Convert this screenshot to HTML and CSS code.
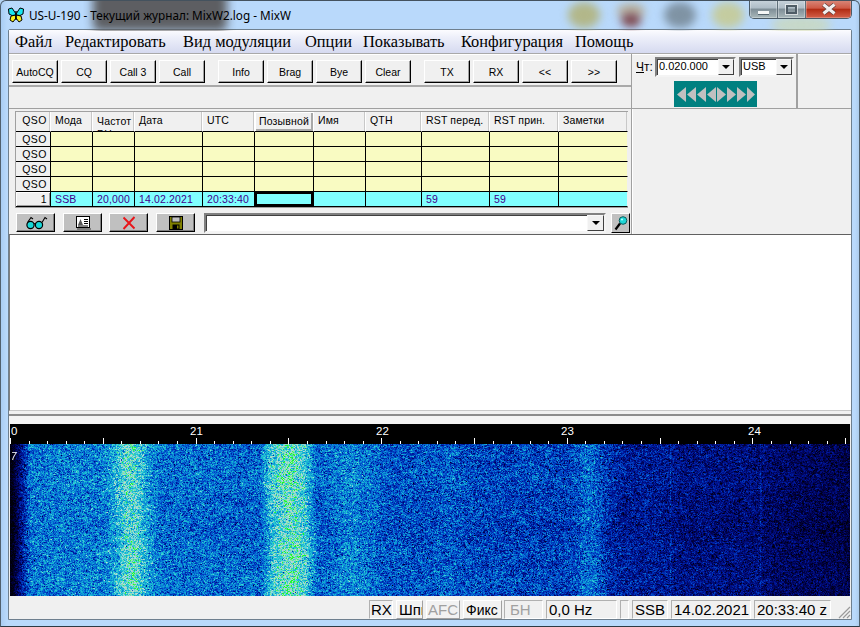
FILE: index.html
```html
<!DOCTYPE html>
<html lang="ru">
<head>
<meta charset="utf-8">
<title>MixW</title>
<link rel="stylesheet" href="styles.css">
</head>
<body>
<div class="window">
  <div class="glass">
    <div class="blob shade"></div>
    <div class="blob b1"></div><div class="blob b2"></div><div class="blob b2b"></div><div class="blob b3"></div><div class="blob b4"></div><div class="blob b5"></div>
  </div>
  <header class="titlebar">
    <svg class="appicon" viewBox="0 0 16 16" width="16" height="16">
      <path d="M8 7 L4 1 L0.5 2 L1 7 L4 8.5 L8 8Z" fill="#19e6f0" stroke="#000" stroke-width="1"/>
      <path d="M8 7 L12 1 L15.5 2 L15 7 L12 8.5 L8 8Z" fill="#19e6f0" stroke="#000" stroke-width="1"/>
      <path d="M8 8 L3 9 L2 13 L5 15 L8 11Z" fill="#f6ee1a" stroke="#000" stroke-width="1"/>
      <path d="M8 8 L13 9 L14 13 L11 15 L8 11Z" fill="#f6ee1a" stroke="#000" stroke-width="1"/>
      <path d="M8 4V13" stroke="#000" stroke-width="1.4"/>
    </svg>
    <span class="apptitle">US-U-190 - Текущий журнал: MixW2.log - MixW</span>
    <div class="winbtns">
      <div class="wb wb-min"><i class="dash"></i></div>
      <div class="wb wb-max"><i class="sq"></i></div>
      <div class="wb wb-close">
        <svg viewBox="0 0 16 12" width="16" height="12"><path d="M2.5 1.5 L13.5 10.5 M13.5 1.5 L2.5 10.5" stroke="#5b3a36" stroke-width="4.4"/><path d="M2.5 1.5 L13.5 10.5 M13.5 1.5 L2.5 10.5" stroke="#f2eeee" stroke-width="3"/></svg>
      </div>
    </div>
  </header>

  <main class="client">
    <nav class="menu">
      <span class="mi m1">Файл</span><span class="mi m2">Редактировать</span><span class="mi m3">Вид модуляции</span><span class="mi m4">Опции</span><span class="mi m5">Показывать</span><span class="mi m6">Конфигурация</span><span class="mi m7">Помощь</span>
    </nav>

    <section class="topband">
      <div class="macros">
        <div class="btnrow">
          <div class="group">
            <button class="mbtn">AutoCQ</button><button class="mbtn">CQ</button><button class="mbtn">Call 3</button><button class="mbtn">Call</button>
          </div>
          <div class="group">
            <button class="mbtn">Info</button><button class="mbtn">Brag</button><button class="mbtn">Bye</button><button class="mbtn">Clear</button>
          </div>
          <div class="group">
            <button class="mbtn">TX</button><button class="mbtn">RX</button><button class="mbtn">&lt;&lt;</button><button class="mbtn">&gt;&gt;</button>
          </div>
        </div>
      </div>
      <div class="tuner">
        <div class="tunerow">
          <label class="chlabel"><u>Ч</u>т:</label>
          <div class="combo c-freq"><span class="cval">0.020.000</span><span class="carrow"><i></i></span></div>
          <div class="combo c-mode"><span class="cval">USB</span><span class="carrow"><i></i></span></div>
        </div>
        <svg class="arrows" viewBox="0 0 83 26" width="83" height="26">
          <rect width="83" height="26" fill="#008080"/>
          <g fill="#c0c0c0">
            <path d="M3 13.5 L12 6 V21Z"/><path d="M13 13.5 L22 6 V21Z"/><path d="M23 13.5 L32 6 V21Z"/><path d="M33 13.5 L42 6 V21Z"/>
            <path d="M43 6 L52 13.5 L43 21Z"/><path d="M53 6 L62 13.5 L53 21Z"/><path d="M63 6 L72 13.5 L63 21Z"/><path d="M73 6 L81 13.5 L73 21Z"/>
          </g>
        </svg>
      </div>
    </section>

    <section class="logband">
      <div class="logleft">
        <table class="log">
          <colgroup>
            <col class="k35"><col class="k42"><col class="k42"><col class="k68"><col class="k52"><col class="k59"><col class="k52"><col class="k56"><col class="k68"><col class="k69"><col class="k69">
          </colgroup>
          <thead>
            <tr>
              <th class="rh">QSO</th><th>Мода</th><th class="clip"><div>Частот<br>РЦ</div></th><th>Дата</th><th>UTC</th><th class="sel">Позывной</th><th>Имя</th><th>QTH</th><th>RST перед.</th><th>RST прин.</th><th>Заметки</th>
            </tr>
          </thead>
          <tbody>
            <tr class="old"><td class="rh">QSO</td><td></td><td></td><td></td><td></td><td></td><td></td><td></td><td></td><td></td><td></td></tr>
            <tr class="old"><td class="rh">QSO</td><td></td><td></td><td></td><td></td><td></td><td></td><td></td><td></td><td></td><td></td></tr>
            <tr class="old"><td class="rh">QSO</td><td></td><td></td><td></td><td></td><td></td><td></td><td></td><td></td><td></td><td></td></tr>
            <tr class="old"><td class="rh">QSO</td><td></td><td></td><td></td><td></td><td></td><td></td><td></td><td></td><td></td><td></td></tr>
            <tr class="cur"><td class="rh rnum">1</td><td>SSB</td><td>20,000</td><td>14.02.2021</td><td>20:33:40</td><td class="focus"></td><td></td><td></td><td>59</td><td>59</td><td></td></tr>
          </tbody>
        </table>
        <div class="logtools">
          <button class="ibtn"><svg viewBox="0 0 24 14" width="24" height="14"><circle cx="6.5" cy="9" r="3.6" fill="#19d8d8" stroke="#000" stroke-width="1.2"/><circle cx="15" cy="9" r="3.6" fill="#19d8d8" stroke="#000" stroke-width="1.2"/><path d="M10 8 Q11 7 11.6 8 M3.5 6.5 L7 1.5 L9 3 M18 6.5 L21 1.5 L23 3" fill="none" stroke="#000" stroke-width="1.1"/></svg></button>
          <button class="ibtn"><svg viewBox="0 0 16 15" width="16" height="15"><rect x="1.5" y="1.5" width="13" height="11" fill="#fff" stroke="#000"/><path d="M3 10 L5.5 4 L8 10Z" fill="#555"/><path d="M9 4.5h4M9 6.5h4M9 8.5h4M3 11h10" stroke="#000"/><path d="M2 14h14" stroke="#666" stroke-width="1.4"/></svg></button>
          <button class="ibtn"><svg viewBox="0 0 14 14" width="14" height="14"><path d="M1.5 1.5 L12.5 12.5 M12.5 1 L1.5 13" stroke="#e8161a" stroke-width="1.9"/></svg></button>
          <button class="ibtn"><svg viewBox="0 0 14 14" width="14" height="14"><rect x="0.5" y="0.5" width="13" height="13" fill="#808000" stroke="#000"/><rect x="3" y="1" width="8" height="5" fill="#c0c0c0" stroke="#000" stroke-width=".8"/><rect x="3.5" y="8.5" width="7" height="5" fill="#000"/><rect x="8" y="9.5" width="1.5" height="3" fill="#808000"/></svg></button>
          <div class="combo c-search"><span class="cval"></span><span class="carrow"><i></i></span></div>
          <button class="findbtn"><svg viewBox="0 0 14 16" width="14" height="16"><path d="M1.5 14.5 L6 8.5" stroke="#000" stroke-width="2.2"/><circle cx="9" cy="5.5" r="3.8" fill="#1fd6d6" stroke="#0a5c5c" stroke-width="1"/><circle cx="8" cy="4.5" r="1" fill="#bff"/></svg></button>
        </div>
      </div>
      <div class="logright"></div>
    </section>

    <section class="rxtext"></section>
    <div class="splitter"></div>

    <section class="scope">
      <div class="ruler">
        <svg id="ruler" width="840" height="20" viewBox="0 0 840 20">
          <path id="ticks" stroke="#fff" stroke-width="1" fill="none"/>
          <g class="rlabels" fill="#fff">
            <text x="1" y="11">0</text>
            <text x="180" y="11">21</text>
            <text x="366" y="11">22</text>
            <text x="551" y="11">23</text>
            <text x="738" y="11">24</text>
          </g>
        </svg>
      </div>
      <div class="fallwrap">
        <canvas id="fall" width="840" height="152"></canvas>
        <span class="level">7</span>
      </div>
    </section>

    <footer class="status">
      <span class="sb plain w-rx">RX</span>
      <span class="sb up w-sh">Шпи</span>
      <span class="sb up dis w-afc">AFC</span>
      <span class="sb up w-fix">Фикс</span>
      <span class="sb plain dis w-bn">БН</span>
      <span class="sb plain w-hz">0,0 Hz</span>
      <span class="sb plain w-e"></span>
      <span class="sb plain w-ssb">SSB</span>
      <span class="sb plain w-date">14.02.2021</span>
      <span class="sb plain w-time">20:33:40 z</span>
      <svg class="grip" viewBox="0 0 14 14" width="14" height="14"><path d="M13 2 L2 13 M13 6 L6 13 M13 10 L10 13" stroke="#9a9a9a" stroke-width="1.2"/></svg>
    </footer>
  </main>
</div>
<script src="app.js"></script>
</body>
</html>
```
FILE: styles.css
```css
* { box-sizing: border-box; }
html, body { margin: 0; padding: 0; }
body { width: 860px; height: 627px; overflow: hidden; background: #b4d3f3; font-family: "Liberation Sans", Arial, sans-serif; }
button { font: inherit; margin: 0; padding: 0; color: inherit; }

.window { position: relative; width: 860px; height: 627px; display: flex; flex-direction: column; overflow: hidden;
  background: linear-gradient(90deg, #a9cdf3 0, #b9d9fb 6px, #b9d9fb 854px, #a6c6e6 860px); border-bottom: 1px solid #2c3a44; border-left: 1px solid #50606e; border-right: 1px solid #50606e; border-top: 1px solid #44525e; border-radius: 6px 6px 0 0; }

.glass { position: absolute; inset: 0 0 auto 0; height: 30px; overflow: hidden; }
.blob { position: absolute; border-radius: 50%; filter: blur(4px); }
.shade { left: 92px; top: -14px; width: 134px; height: 44px; border-radius: 6px; background: #58585a; filter: blur(5px); opacity: .95; }
.b1 { left: 567px; top: 1px; width: 32px; height: 26px; background: #b2b78a; }
.b2 { left: 616px; top: 2px; width: 28px; height: 16px; background: #b7b3a2; }
.b2b { left: 620px; top: 12px; width: 20px; height: 14px; background: #7f4a52; }
.b3 { left: 663px; top: 1px; width: 32px; height: 26px; background: #7f93a4; }
.b4 { left: 711px; top: 1px; width: 32px; height: 26px; background: #c4cca0; }
.b5 { left: 770px; top: 14px; width: 60px; height: 20px; background: #d0d8a8; opacity: .6; }

.titlebar { position: relative; height: 28px; flex: none; display: flex; align-items: center; padding-left: 7px; }
.appicon { flex: none; margin-right: 5px; }
.apptitle { font: 11.75px "Noto Sans", "Open Sans", sans-serif; color: #000; white-space: nowrap; }
.winbtns { position: absolute; right: 7px; top: -1px; display: flex; height: 19px; border: 1px solid #4a5a66; border-top: 0; border-radius: 0 0 5px 5px; overflow: hidden; }
.wb { display: flex; align-items: center; justify-content: center; height: 18px; }
.wb-min, .wb-max { width: 28px; background: linear-gradient(#c9d4dc 0, #aebcc6 45%, #7e8d96 50%, #a9b8ba 100%); border-right: 1px solid #5f6f79; box-shadow: inset 0 0 0 1px rgba(255,255,255,.3); }
.wb-close { width: 45px; background: linear-gradient(#d98a7c 0, #cf5a46 45%, #b22c14 52%, #d4604a 100%); box-shadow: inset 0 0 0 1px rgba(255,255,255,.25); }
.dash { display: block; width: 11px; height: 4px; margin-top: 7px; background: #f4f6f6; border: 1px solid #566670; border-width: 0 0 1px 0; }
.sq { display: block; width: 11px; height: 9px; background: transparent; border: 2px solid #4e5c66; box-shadow: 0 0 0 1px rgba(255,255,255,.6); }

.client { flex: 1; min-height: 0; margin: 0 6px 6px 7px; width: 844px; background: #f0f0f0; border: 1px solid #6e7f8e; border-radius: 2px 2px 0 0; display: flex; flex-direction: column; }

.menu { flex: none; height: 24px; display: flex; align-items: center; padding-left: 6px; background: linear-gradient(#fcfcff 0, #eef0fa 30%, #d6daf0 100%); border-bottom: 1px solid #a9a9a9; font: 16.4px "Liberation Serif", "Times New Roman", serif; color: #000; box-shadow: 0 1px 0 #fff; }
.mi { white-space: nowrap; padding-top: 1px; }
.m1 { width: 50px; }
.m2 { width: 118px; }
.m3 { width: 122px; }
.m4 { width: 58px; }
.m5 { width: 98px; }
.m6 { width: 114px; }

.topband { flex: none; height: 55px; display: flex; border-bottom: 1px solid #a0a0a0; }
.macros { width: 622px; flex: none; }
.btnrow { height: 33px; display: flex; padding: 6px 0 0 3px; gap: 13px; border-bottom: 2px solid #a9a9a9; }
.group { display: flex; gap: 3px; }
.mbtn { width: 46px; height: 23px; background: #f0f0f0; border: 1px solid; border-color: #fff #000 #000 #fff; font: 10.5px "Liberation Sans", Arial, sans-serif; box-shadow: inset -1px -1px 0 #a0a0a0; }

.tuner { width: 167px; flex: none; border-left: 1px solid #a0a0a0; border-right: 2px solid #a0a0a0; padding: 3px 0 0 4px; display: flex; flex-direction: column; align-items: center; }
.tunerow { display: flex; align-items: center; align-self: stretch; height: 20px; }
.chlabel { font: 12px "Liberation Sans", Arial, sans-serif; width: 19px; flex: none; }
.combo { display: flex; align-items: stretch; background: #fff; border: 2px solid; border-color: #808080 #f4f4f4 #f4f4f4 #808080; box-shadow: inset 1px 1px 0 #404040; height: 20px; }
.cval { flex: 1; font: 11px "Liberation Sans", Arial, sans-serif; padding: 1px 0 0 2px; color: #000; }
.carrow { width: 16px; background: #f0f0f0; border: 1px solid; border-color: #f8f8f8 #404040 #404040 #f8f8f8; display: flex; align-items: center; justify-content: center; }
.carrow i { display: block; border: 4px solid transparent; border-top: 4px solid #000; border-bottom: 0; }
.c-freq { width: 81px; }
.c-mode { width: 55px; margin-left: 3px; }
.arrows { display: block; margin-top: 4px; margin-left: -2px; flex: none; }

.logband { flex: none; height: 125px; display: flex; }
.logleft { width: 622px; flex: none; padding: 2px 0 0 6px; }
.logright { flex: 1; border-left: 1px solid #a0a0a0; box-shadow: inset 1px 0 0 #fff; }

.log { table-layout: fixed; width: 613px; border-collapse: separate; border-spacing: 0; border: 1px solid #a0a0a0; border-width: 1px 0 1px 1px; font: 10.5px "Liberation Sans", Arial, sans-serif; letter-spacing: .15px; background: #f0f0f0; }
.k35 { width: 35px; } .k42 { width: 42px; } .k68 { width: 68px; } .k52 { width: 52px; } .k59 { width: 59px; } .k56 { width: 56px; } .k69 { width: 69px; }
.log th { height: 20px; padding: 0 0 0 4px; text-align: left; font-weight: 400; color: #000; border-right: 1px solid #fff; border-bottom: 1px solid #000; box-shadow: inset -1px 0 0 #c8c8c8; overflow: hidden; white-space: nowrap; vertical-align: top; line-height: 16px; }
.log th.sel { background: #f0f0f0; box-shadow: inset 1px 1px 0 #fff, inset -2px -2px 0 #a8a8a8; padding-top: 1px; }
.log th.clip div { height: 19px; overflow: hidden; line-height: 13px; padding-top: 3px; }
.log th.rh, .log td.rh { text-align: right; padding: 0 3px 0 0; background: #f0f0f0; color: #000; letter-spacing: .5px; }
.log td { height: 15px; padding: 0 0 0 4px; border-right: 1px solid #000; border-bottom: 1px solid #000; line-height: 14px; overflow: hidden; white-space: nowrap; vertical-align: top; }
.log td:last-child, .log th:last-child { border-right: 1px solid #f0f0f0; }
.old td { background: #f9fbc2; }
.cur td { background: #80ffff; color: #40008c; }
.log td.rh { border-right: 1px solid #000; }
.log td.rnum { box-shadow: inset 1px 1px 0 #fff, inset -1px -1px 0 #a0a0a0; }
.log td.focus { box-shadow: inset 0 0 0 2px #000; background: #80ffff; }

.logtools { display: flex; align-items: flex-start; margin-top: 5px; padding-left: 1px; }
.ibtn { width: 39px; height: 19px; margin-right: 8px; background: #c0c0c0; border: 1px solid; border-color: #fff #000 #000 #fff; box-shadow: inset -1px -1px 0 #808080; display: flex; align-items: center; justify-content: center; }
.ibtn:nth-child(2) { margin-right: 7px; }
.c-search { width: 402px; height: 20px; margin-left: 1px; }
.c-search .carrow { width: 17px; }
.findbtn { width: 19px; height: 20px; margin-left: 5px; background: #c0c0c0; border: 1px solid; border-color: #fff #000 #000 #fff; display: flex; align-items: center; justify-content: center; padding: 0; }

.rxtext { flex: none; height: 177px; background: #fff; border-top: 1px solid #606060; border-left: 1px solid #808080; border-bottom: 1px solid #c8c8c8; }
.splitter { flex: none; height: 5px; background: #f0f0f0; border-bottom: 2px solid #8c8c8c; }

.scope { flex: none; background: #f0f0f0; border-top: 8px solid #f4f4f4; padding-left: 1px; }
.ruler { height: 20px; width: 840px; background: #000; }
#ruler { display: block; }
.rlabels text { font: 11.5px "Liberation Sans", Arial, sans-serif; }
.fallwrap { position: relative; width: 840px; height: 152px; line-height: 0; }
#fall { display: block; width: 840px; height: 152px; }
.level { position: absolute; left: 1px; top: 8px; font: italic 400 10px/10px "Liberation Sans", Arial, sans-serif; color: #fff; }

.status { flex: 1; min-height: 0; display: flex; align-items: flex-start; padding-top: 4px; position: relative; font: 15px/18px "Liberation Sans", Arial, sans-serif; color: #000; background: #f0f0f0; }
.sb { display: block; height: 19px; white-space: nowrap; overflow: hidden; padding-left: 2px; margin-right: 3px; }
.plain { border: 1px solid; border-color: #b0b0b0 #fff #fff #b0b0b0; }
.up { background: #f2f2f2; border: 1px solid; border-color: #fff #a0a0a0 #a0a0a0 #fff; }
.dis { color: #a0a0a0; }
.w-rx { width: 24px; margin-left: 360px; padding-left: 1px; }
.w-sh { width: 27px; }
.w-afc { width: 34px; padding-left: 1px; }
.w-fix { width: 39px; margin-right: 2px; padding-left: 2px; font-size: 14px; }
.w-bn { width: 39px; padding-left: 5px; }
.w-hz { width: 71px; }
.w-e { width: 9px; }
.w-ssb { width: 36px; }
.w-date { width: 80px; }
.w-time { width: 77px; }
.grip { position: absolute; right: 0; bottom: 0; }
```
FILE: app.js
```js
(function () {
  var d = '';
  for (var i = 0; i <= 45; i++) {
    var x = Math.round(i * 18.56) + 0.5;
    var major = i % 5 === 0;
    d += 'M' + x + ' ' + (major ? 14 : 17) + 'V20';
  }
  document.getElementById('ticks').setAttribute('d', d);

  var seed = 12345;
  function rnd() {
    seed = (seed * 1664525 + 1013904223) >>> 0;
    return seed / 4294967296;
  }
  function gauss() { return (rnd() + rnd() + rnd() - 1.5) / 0.5; }
  function bump(x, c, w) { var t = (x - c) / w; return Math.exp(-t * t); }
  function ramp(x, a, b) { return Math.max(0, Math.min(1, (x - a) / (b - a))); }
  function plateau(x, a, b, e) {
    var s = Math.min((x - a) / e, (b - x) / e);
    return s <= -2 ? 0 : s >= 2 ? 1 : 0.5 + s / 4;
  }

  var stops = [
    [0.00, 0, 0, 10], [0.12, 0, 0, 70], [0.28, 0, 20, 150], [0.42, 0, 70, 200],
    [0.55, 10, 130, 215], [0.66, 20, 180, 210], [0.76, 60, 210, 210],
    [0.86, 190, 215, 215], [0.94, 120, 235, 150], [1.00, 20, 250, 40]
  ];
  function color(v) {
    v = Math.max(0, Math.min(1, v));
    for (var i = 1; i < stops.length; i++) {
      if (v <= stops[i][0]) {
        var a = stops[i - 1], b = stops[i], t = (v - a[0]) / (b[0] - a[0]);
        return [a[1] + (b[1] - a[1]) * t, a[2] + (b[2] - a[2]) * t, a[3] + (b[3] - a[3]) * t];
      }
    }
    return stops[stops.length - 1].slice(1);
  }

  function base(X) {
    var v;
    if (X < 150) v = 0.5;
    else if (X < 380) v = 0.5 - (X - 150) * 0.00015;
    else v = 0.445 - (X - 380) * 0.0003;
    v -= 0.09 * ramp(X, 590, 625);
    v -= 0.03 * ramp(X, 660, 680);
    v -= 0.04 * ramp(X, 750, 790);
    v -= 0.03 * ramp(X, 820, 850);
    v *= ramp(X, 12, 30);
    v += 0.04 * bump(X, 75, 45);
    v += 0.3 * bump(X, 131, 17);
    v += 0.26 * plateau(X, 266, 311, 3);
    v += 0.11 * bump(X, 289, 11);
    v += 0.08 * bump(X, 352, 18);
    v += 0.03 * bump(X, 450, 14);
    v += 0.11 * bump(X, 590, 13);
    v += 0.09 * bump(X, 670, 0.8);
    v += 0.08 * bump(X, 760, 0.9);
    v += 0.03 * bump(X, 450, 1);
    v += 0.03 * bump(X, 835, 1);
    return v;
  }

  var cv = document.getElementById('fall');
  var w = cv.width, h = cv.height;
  var ctx = cv.getContext('2d');
  var img = ctx.createImageData(w, h);
  var prev = new Float32Array(w);
  for (var y = 0; y < h; y++) {
    var drift = 0.012 * Math.sin(y / 17) + 0.008 * Math.sin(y / 5.3 + 1);
    var shift = 1.5 * Math.sin(y / 23);
    for (var xx = 0; xx < w; xx++) {
      var inBand = xx > 100 && xx < 330 ? shift : 0;
      var b = base(xx + 10 + inBand);
      var left = xx > 0 ? prev[xx - 1] : 0;
      var n = gauss() * 0.8 + left * 0.2 + prev[xx] * 0.1;
      prev[xx] = n;
      var v = b + n * 0.13 * Math.min(1, 0.4 + b * 1.6) + drift;
      if (rnd() < 0.012) v -= 0.25;
      var c = color(v);
      var p = (y * w + xx) * 4;
      img.data[p] = c[0]; img.data[p + 1] = c[1]; img.data[p + 2] = c[2]; img.data[p + 3] = 255;
    }
  }
  ctx.putImageData(img, 0, 0);
})();
```
